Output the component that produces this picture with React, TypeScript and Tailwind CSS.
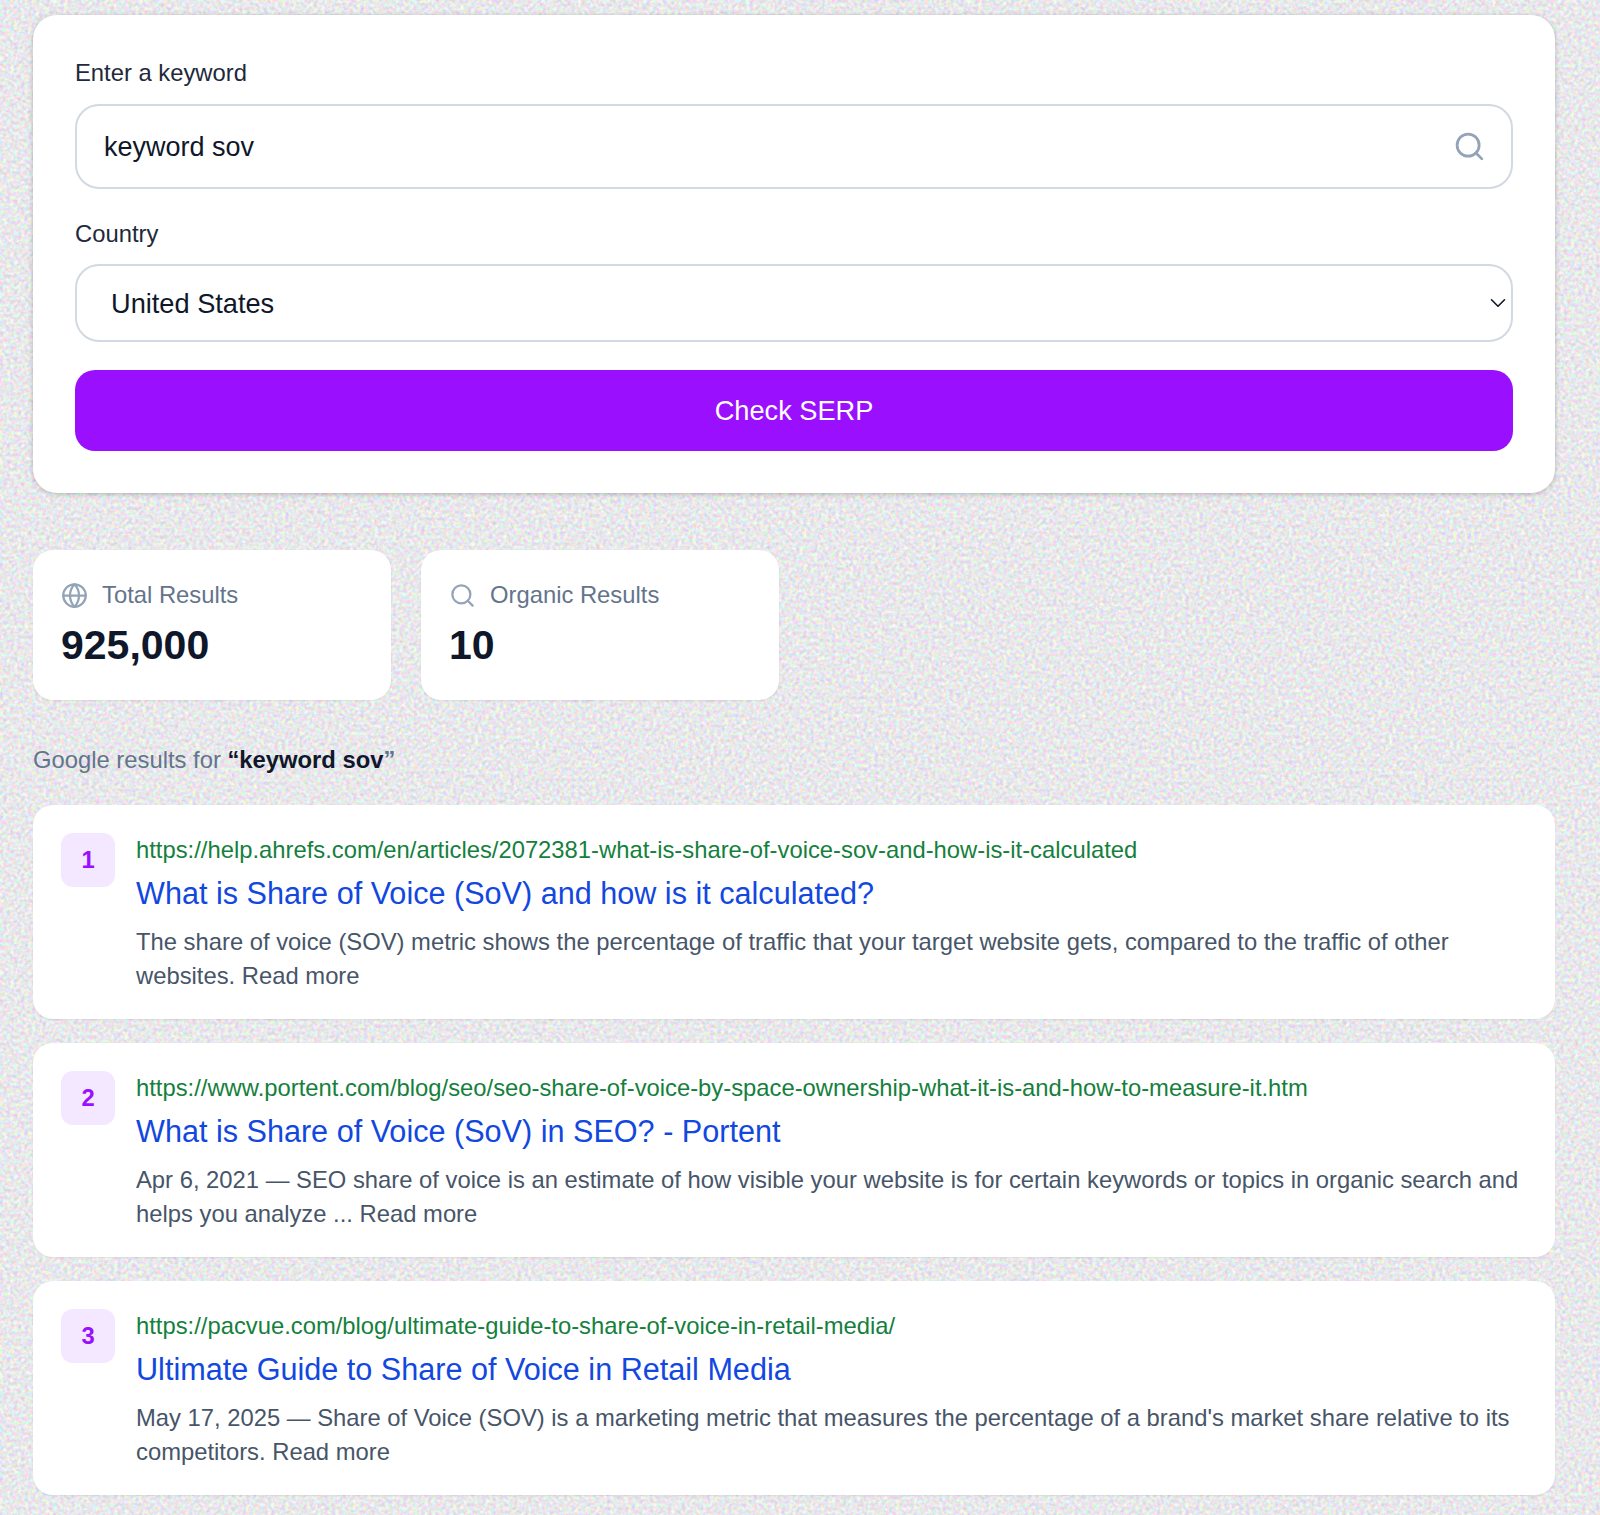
import React from 'react';
import { Search, Globe, ChevronDown } from 'lucide-react';

const RESULTS = [
  {
    rank: 1,
    url: 'https://help.ahrefs.com/en/articles/2072381-what-is-share-of-voice-sov-and-how-is-it-calculated',
    title: 'What is Share of Voice (SoV) and how is it calculated?',
    snippet:
      'The share of voice (SOV) metric shows the percentage of traffic that your target website gets, compared to the traffic of other websites. Read more',
  },
  {
    rank: 2,
    url: 'https://www.portent.com/blog/seo/seo-share-of-voice-by-space-ownership-what-it-is-and-how-to-measure-it.htm',
    title: 'What is Share of Voice (SoV) in SEO? - Portent',
    snippet:
      'Apr 6, 2021 — SEO share of voice is an estimate of how visible your website is for certain keywords or topics in organic search and helps you analyze ... Read more',
  },
  {
    rank: 3,
    url: 'https://pacvue.com/blog/ultimate-guide-to-share-of-voice-in-retail-media/',
    title: 'Ultimate Guide to Share of Voice in Retail Media',
    snippet:
      "May 17, 2025 — Share of Voice (SOV) is a marketing metric that measures the percentage of a brand's market share relative to its competitors. Read more",
  },
];

const App: React.FC = () => {
  return (
    <div className="relative min-h-[1515px] overflow-hidden bg-[#e7e6ea] font-['Liberation_Sans',Arial,sans-serif]">
      {/* Noise texture behind everything */}
      <svg className="absolute inset-0 h-full w-full" aria-hidden="true">
        <filter id="grain" colorInterpolationFilters="sRGB" x="0" y="0" width="100%" height="100%">
          <feTurbulence type="fractalNoise" baseFrequency="0.28" numOctaves="2" seed="4" />
          <feColorMatrix
            type="matrix"
            values="0.36 -0.08 0 0 0.77  0 0.36 -0.08 0 0.77  -0.08 0 0.36 0 0.78  0 0 0 0 1"
          />
        </filter>
        <rect width="100%" height="100%" filter="url(#grain)" />
      </svg>

      <div className="relative flex flex-col pl-[33px] pr-[45px] pt-[15px]">
        {/* Search form */}
        <div className="rounded-[24px] bg-white px-[42px] pb-[42px] pt-[42px] shadow-[0_1px_5px_rgba(0,0,0,0.25)]">
          <label className="block text-[23.8px] leading-[32px] text-[#1e293b]">Enter a keyword</label>
          <div className="mt-[15px] flex h-[85px] items-center justify-between rounded-[24px] border-2 border-[#d3d9e2] pl-[27px] pr-[25px]">
            <span className="pt-[1px] text-[27px] text-[#0f172a]">keyword sov</span>
            <Search className="h-[33px] w-[33px] text-[#94a3b8]" strokeWidth={2} />
          </div>
          <label className="mt-[28px] block pt-[1px] text-[23.8px] leading-[31px] text-[#1e293b]">Country</label>
          <div className="mt-[15px] flex h-[78px] items-center justify-between rounded-[24px] border-2 border-[#d3d9e2] pl-[34px]">
            <span className="pt-[2px] text-[27.2px] text-[#0f172a]">United States</span>
            <ChevronDown className="h-[26px] w-[26px] text-[#111827]" strokeWidth={1.5} />
          </div>
          <button className="mt-[28px] flex h-[81px] w-full items-center justify-center rounded-[20px] bg-[#9b0fff] pt-[1px] text-[27.2px] text-white">
            Check SERP
          </button>
        </div>

        {/* Stats */}
        <div className="mt-[57px] flex gap-[30px]">
          <div className="h-[150px] w-[358px] rounded-[20px] bg-white pl-[28px] pt-[29px] shadow-[0_1px_2px_rgba(0,0,0,0.08)]">
            <div className="flex items-center gap-[14px] text-[23.8px] leading-[32px] text-[#64748b]">
              <Globe className="h-[27px] w-[27px] text-[#94a3b8]" strokeWidth={2} />
              Total Results
            </div>
            <div className="mt-[9px] text-[41px] font-bold leading-[50px] text-[#0f172a]">925,000</div>
          </div>
          <div className="h-[150px] w-[358px] rounded-[20px] bg-white pl-[28px] pt-[29px] shadow-[0_1px_2px_rgba(0,0,0,0.08)]">
            <div className="flex items-center gap-[14px] text-[23.8px] leading-[32px] text-[#64748b]">
              <Search className="h-[27px] w-[27px] text-[#94a3b8]" strokeWidth={2} />
              Organic Results
            </div>
            <div className="mt-[9px] text-[41px] font-bold leading-[50px] text-[#0f172a]">10</div>
          </div>
        </div>

        <p className="mt-[44px] text-[23.8px] leading-[32px] text-[#64748b]">
          Google results for <span className="font-bold text-[#0f172a]">“keyword sov</span>
          <span className="font-bold">”</span>
        </p>

        {/* Result list */}
        <div className="mt-[29px] flex flex-col gap-[24px]">
          {RESULTS.map((r) => (
            <div
              key={r.rank}
              className="flex h-[214px] gap-[21px] rounded-[20px] bg-white pl-[28px] pr-[35px] pt-[28px] shadow-[0_1px_2px_rgba(0,0,0,0.08)]"
            >
              <div className="flex h-[54px] w-[54px] shrink-0 items-center justify-center rounded-[12px] bg-[#f3e8ff] text-[23.8px] font-bold text-[#9b0fff]">
                {r.rank}
              </div>
              <div className="min-w-0 pt-[2px]">
                <div className="text-[23.8px] leading-[30px] text-[#15803d]">{r.url}</div>
                <div className="mt-[7px] text-[30.6px] leading-[42px] text-[#1247e0]">{r.title}</div>
                <div className="mt-[11px] text-[23.8px] leading-[34px] text-[#475569]">{r.snippet}</div>
              </div>
            </div>
          ))}
        </div>
      </div>
    </div>
  );
};

export default App;
